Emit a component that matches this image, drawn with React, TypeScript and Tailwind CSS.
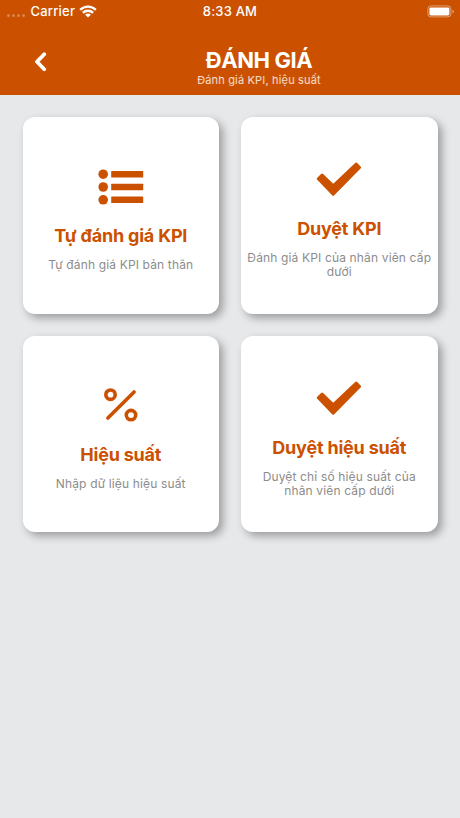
import React from "react";

type IconName = "list" | "check" | "percent";

interface MenuItem {
  icon: IconName;
  title: string;
  description: string;
}

const items: MenuItem[] = [
  { icon: "list", title: "Tự đánh giá KPI", description: "Tự đánh giá KPI bản thân" },
  { icon: "check", title: "Duyệt KPI", description: "Đánh giá KPI của nhân viên cấp\ndưới" },
  { icon: "percent", title: "Hiệu suất", description: "Nhập dữ liệu hiệu suất" },
  { icon: "check", title: "Duyệt hiệu suất", description: "Duyệt chỉ số hiệu suất của\nnhân viên cấp dưới" },
];

function MenuIcon({ name }: { name: IconName }) {
  if (name === "list") {
    return (
      <svg width="46" height="36" viewBox="0 0 46 36" fill="currentColor">
        {[5.2, 18, 30.8].map((y) => (
          <g key={y}>
            <circle cx="5.2" cy={y} r="4.8" />
            <rect x="13.2" y={y - 3.3} width="32" height="6.6" rx="0.6" />
          </g>
        ))}
      </svg>
    );
  }
  if (name === "percent") {
    return (
      <svg width="34" height="34" viewBox="0 0 34 34" fill="none" stroke="currentColor" strokeWidth="3.6" strokeLinecap="round">
        <circle cx="6.5" cy="6.7" r="4.7" />
        <circle cx="27" cy="27.1" r="4.7" />
        <path d="M3.9 30.1 30.1 3.9" />
      </svg>
    );
  }
  return (
    <svg width="46" height="34" viewBox="0 0 46 34" fill="currentColor" stroke="currentColor" strokeWidth="3" strokeLinejoin="round">
      <path d="M2.3 16.8 6.1 13.2 17.2 23.9 40.2 2.1 43.5 5.5 17.2 32.1Z" />
    </svg>
  );
}

function StatusBar() {
  return (
    <div className="grid h-[23px] grid-cols-3 items-center text-[13px] font-medium tracking-[0.2px]">
      <div className="flex items-center pl-[7px]">
        <div className="flex w-[23.5px] gap-[2px] pt-[7px]">
          {[0, 1, 2, 3].map((dot) => (
            <span key={dot} className="h-[3px] w-[3px] rounded-full bg-white/30" />
          ))}
        </div>
        <span>Carrier</span>
        <svg className="ml-[4px]" width="18" height="13" viewBox="0 0 18 13" fill="none" stroke="currentColor" strokeWidth="2.4">
          <path d="M1.2 4.8a11.2 11.2 0 0 1 15.6 0" />
          <path d="M3.9 7.8a7.3 7.3 0 0 1 10.2 0" />
          <path d="M9 12.6 6.1 9.8a4.2 4.2 0 0 1 5.8 0Z" fill="currentColor" stroke="none" />
        </svg>
      </div>
      <div className="text-center">8:33 AM</div>
      <div className="flex justify-end pr-[5px]">
        <svg width="28" height="13" viewBox="0 0 28 13" fill="none">
          <rect x="0.9" y="0.9" width="23" height="11" rx="3" stroke="white" strokeOpacity="0.45" />
          <rect x="2.4" y="2.4" width="20" height="8" rx="1.4" fill="white" />
          <path d="M25.5 4.5c1.7.6 1.7 3.4 0 4Z" fill="white" fillOpacity="0.5" />
        </svg>
      </div>
    </div>
  );
}

function Header() {
  return (
    <header className="h-[95px] bg-[#cb5100] text-white">
      <StatusBar />
      <div className="grid grid-cols-[58px_1fr_58px] pt-[24px]">
        <button type="button" aria-label="Quay lại" className="flex h-[30px] items-center justify-end pr-[11px]">
          <svg width="13" height="20" viewBox="0 0 13 20" fill="none" stroke="currentColor" strokeWidth="3.8" strokeLinejoin="round" strokeLinecap="round">
            <path d="M10.2 2.2 3 9.8 10.2 17.2" />
          </svg>
        </button>
        <div className="pl-[58px] text-center">
          <h1 className="text-[22px] leading-[27px] font-bold tracking-[-0.4px]">ĐÁNH GIÁ</h1>
          <p className="text-[11px] leading-[13px] tracking-[0.17px] text-white/80">Đánh giá KPI, hiệu suất</p>
        </div>
      </div>
    </header>
  );
}

function MenuCard({ item }: { item: MenuItem }) {
  return (
    <div className="flex h-[196.5px] flex-col items-center justify-center rounded-[12px] bg-white text-center shadow-[4px_4px_9px_rgba(0,0,0,0.33)]">
      <div className="flex h-[57px] items-center text-[#cb5100]">
        <MenuIcon name={item.icon} />
      </div>
      <h2 className="mt-[9px] text-[18px] leading-[23px] font-bold tracking-[-0.2px] text-[#cb5100]">{item.title}</h2>
      <p className="mt-[11px] text-[12px] leading-[14.4px] tracking-[0.15px] whitespace-pre-line text-[#8c8c8c]">{item.description}</p>
    </div>
  );
}

export default function App() {
  return (
    <div className="h-[818px] w-[460px] overflow-hidden bg-[#e7e8ea] font-[Inter,'Liberation_Sans',sans-serif]">
      <Header />
      <main className="grid grid-cols-2 gap-x-[22px] gap-y-[22.4px] px-[22.5px] pt-[22px]">
        {items.map((item) => (
          <MenuCard key={item.title} item={item} />
        ))}
      </main>
    </div>
  );
}
